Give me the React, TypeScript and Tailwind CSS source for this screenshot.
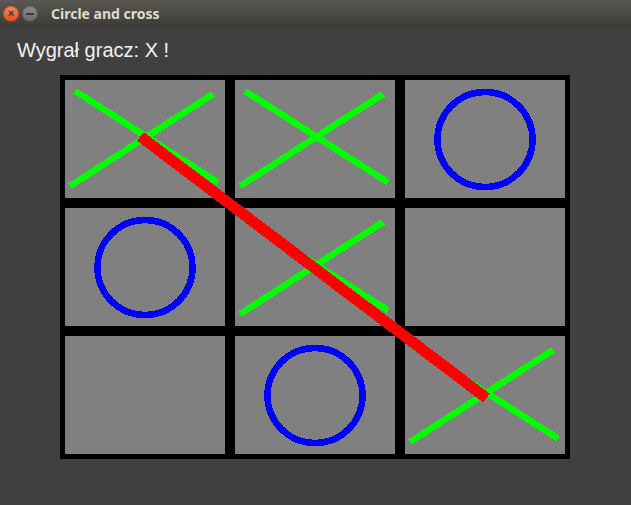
type Mark = "X" | "O" | "";

const board: Mark[] = ["X", "X", "O", "O", "X", "", "", "O", "X"];

function Cross() {
  return (
    <svg width="160" height="118" className="block" shapeRendering="crispEdges">
      <line x1="10" y1="11" x2="153" y2="102.5" stroke="#00ff00" strokeWidth="6.5" />
      <line x1="5" y1="106" x2="148" y2="14" stroke="#00ff00" strokeWidth="6.5" />
    </svg>
  );
}

function Circle() {
  return (
    <svg width="160" height="118" className="block" shapeRendering="crispEdges">
      <circle cx="80" cy="59.5" r="47.5" fill="none" stroke="#0000ff" strokeWidth="6.5" />
    </svg>
  );
}

export default function App() {
  return (
    <div
      className="h-[505px] w-[631px] overflow-hidden bg-[#404040]"
      style={{ fontFamily: '"Liberation Sans", Arial, sans-serif' }}
    >
      {/* title bar */}
      <div className="flex h-[27px] items-center bg-gradient-to-b from-[#5a5851] to-[#3c3b37]">
        <div className="ml-[3px] flex h-4 w-4 items-center justify-center rounded-full bg-gradient-to-b from-[#f68b5d] to-[#e0491a] shadow-[inset_0_0_0_1px_rgba(0,0,0,0.25)]">
          <span className="text-[11px] font-bold leading-none text-[#3c3b37]">×</span>
        </div>
        <div className="ml-[3px] flex h-4 w-4 items-center justify-center rounded-full bg-gradient-to-b from-[#8d8c88] to-[#6a6965] shadow-[inset_0_0_0_1px_rgba(0,0,0,0.25)]">
          <span className="h-[2px] w-[8px] bg-[#3c3b37]" />
        </div>
        <span
          className="ml-[13px] text-[14px] font-bold text-[#dfdbd2]"
          style={{ fontFamily: '"Noto Sans", "DejaVu Sans", sans-serif' }}
        >
          Circle and cross
        </span>
      </div>

      <div className="pl-[17px] pt-[12px] text-[20px] leading-[23px] text-[#f2f2f2]">
        Wygrał gracz: X !
      </div>

      <div className="relative ml-[60px] mt-[13px] grid w-[510px] grid-cols-[160px_160px_160px] grid-rows-[118px_118px_118px] gap-[10px] bg-black p-[5px]">
        {board.map((m, i) => (
          <div key={i} className="bg-[#808080]">
            {m === "X" && <Cross />}
            {m === "O" && <Circle />}
          </div>
        ))}
        <svg
          width="510"
          height="384"
          className="pointer-events-none absolute left-0 top-0"
          shapeRendering="crispEdges"
        >
          <line x1="80.5" y1="61.5" x2="426.5" y2="323" stroke="#ff0000" strokeWidth="11" />
        </svg>
      </div>
    </div>
  );
}
